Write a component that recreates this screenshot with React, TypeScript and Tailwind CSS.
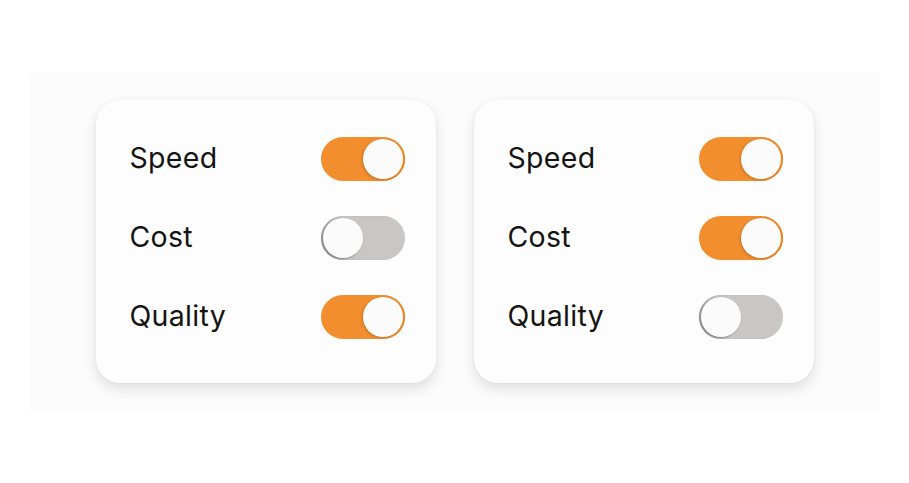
import React from 'react'

type Row = { label: string; on: boolean }

const cards: Row[][] = [
  [
    { label: 'Speed', on: true },
    { label: 'Cost', on: false },
    { label: 'Quality', on: true },
  ],
  [
    { label: 'Speed', on: true },
    { label: 'Cost', on: true },
    { label: 'Quality', on: false },
  ],
]

const Toggle = ({ on }: { on: boolean }) => {
  return (
    <div
      className={
        on
          ? 'flex h-[44px] w-[84px] items-center justify-end rounded-full bg-[#f38e2e] px-[2px] shadow-[inset_-1px_0_0_#e9831f]'
          : 'flex h-[44px] w-[84px] items-center justify-start rounded-full bg-[#c9c7c6] px-[2px] shadow-[inset_1px_0_1px_#9c9a99]'
      }
    >
      <div
        className={
          on
            ? 'h-[40px] w-[40px] rounded-full bg-[#fbfbfb] shadow-[-1px_1px_3px_rgba(0,0,0,0.18)]'
            : 'h-[40px] w-[40px] rounded-full bg-[#fbfbfb] shadow-[-1px_1px_2px_rgba(0,0,0,0.35)]'
        }
      />
    </div>
  )
}

const App = () => {
  return (
    <div className="flex h-[483px] w-[909px] items-center justify-center bg-white font-['Inter','Noto_Sans',sans-serif] text-[#141414]">
      <div className="flex h-[337px] w-[852px] items-center justify-center gap-[38px] bg-[#fcfcfc]">
        {cards.map((rows, i) => (
          <div
            key={i}
            className="flex h-[283px] w-[340px] flex-col rounded-[24px] bg-[#fdfdfd] pb-[27px] pl-[34px] pr-[31px] pt-[19px] shadow-[0_6px_14px_rgba(0,0,0,0.12),0_0_2px_rgba(0,0,0,0.06)]"
          >
            {rows.map((r) => (
              <div key={r.label} className="flex h-[79px] items-center justify-between">
                <span className="text-[28.5px] tracking-[0.3px]">{r.label}</span>
                <Toggle on={r.on} />
              </div>
            ))}
          </div>
        ))}
      </div>
    </div>
  )
}

export default App
